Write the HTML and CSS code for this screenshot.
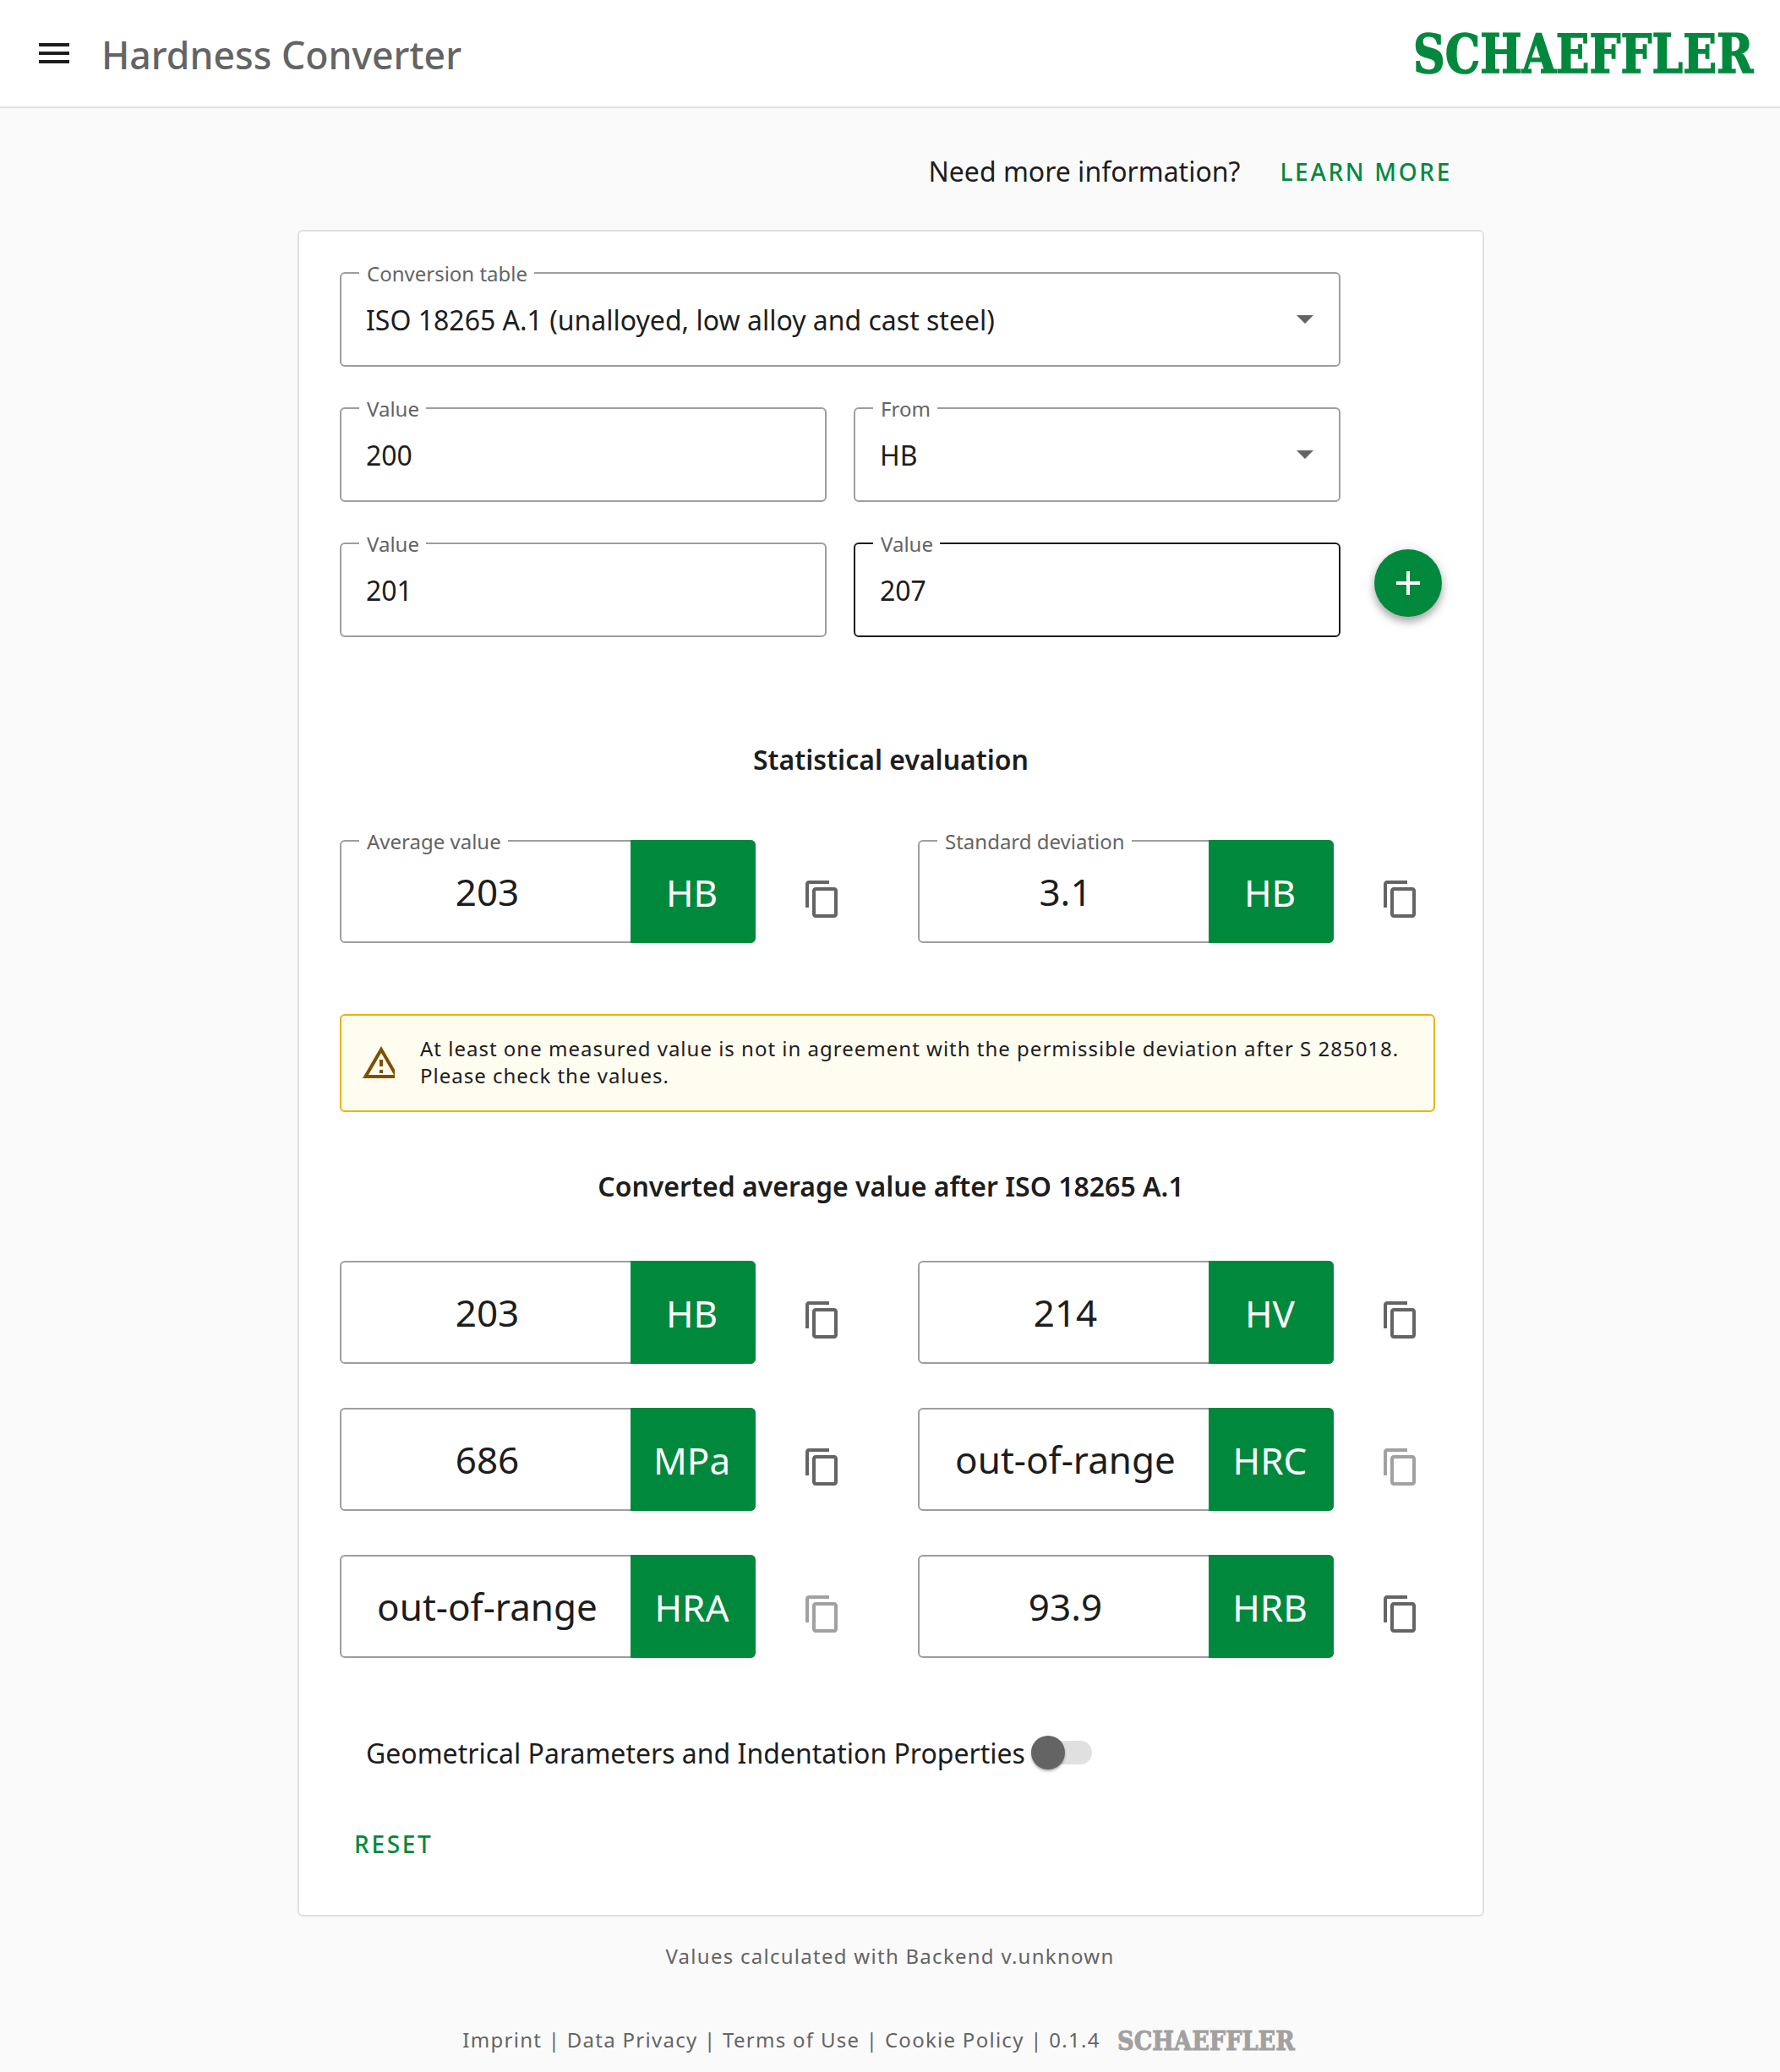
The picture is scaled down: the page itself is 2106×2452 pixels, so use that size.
FILE: index.html
```html
<!DOCTYPE html>
<html lang="en">
<head>
    <meta charset="UTF-8">
    <meta name="viewport" content="width=device-width, initial-scale=1.0">
    <title>Hardness Converter</title>
    <link rel="stylesheet" href="styles.css">
</head>
<body>
    <header class="topbar">
        <svg class="menu-icon" viewBox="0 0 36 24"><path d="M0 0h36v4H0zM0 10h36v4H0zM0 20h36v4H0z"/></svg>
        <h1 class="app-title">Hardness Converter</h1>
        <span class="logo">SCHAEFFLER</span>
    </header>

    <div class="info-row">
        <span>Need more information?</span>
        <a class="link-btn" href="#">LEARN MORE</a>
    </div>

    <main class="card">
        <div class="field wide select">
            <label>Conversion table</label>
            <span>ISO 18265 A.1 (unalloyed, low alloy and cast steel)</span>
        </div>

        <div class="form-row">
            <div class="field">
                <label>Value</label>
                <span>200</span>
            </div>
            <div class="field select">
                <label>From</label>
                <span>HB</span>
            </div>
        </div>

        <div class="form-row">
            <div class="field">
                <label>Value</label>
                <span>201</span>
            </div>
            <div class="field focused">
                <label>Value</label>
                <span>207</span>
            </div>
            <button class="fab" type="button">
                <svg viewBox="0 0 28 28"><path d="M12 0h4v12h12v4H16v12h-4V16H0v-4h12z"/></svg>
            </button>
        </div>

        <h2 class="section-title first">Statistical evaluation</h2>

        <div class="results stats">
            <div class="result">
                <div class="result-box">
                    <label>Average value</label>
                    <span class="result-value">203</span>
                    <span class="result-unit">HB</span>
                </div>
                <svg class="copy" viewBox="0 0 24 24"><path d="M16 1H4c-1.1 0-2 .9-2 2v14h2V3h12V1zm3 4H8c-1.1 0-2 .9-2 2v14c0 1.1.9 2 2 2h11c1.1 0 2-.9 2-2V7c0-1.1-.9-2-2-2zm0 16H8V7h11v14z"/></svg>
            </div>
            <div class="result">
                <div class="result-box">
                    <label>Standard deviation</label>
                    <span class="result-value">3.1</span>
                    <span class="result-unit">HB</span>
                </div>
                <svg class="copy" viewBox="0 0 24 24"><path d="M16 1H4c-1.1 0-2 .9-2 2v14h2V3h12V1zm3 4H8c-1.1 0-2 .9-2 2v14c0 1.1.9 2 2 2h11c1.1 0 2-.9 2-2V7c0-1.1-.9-2-2-2zm0 16H8V7h11v14z"/></svg>
            </div>
        </div>

        <div class="banner">
            <div class="banner-icon">
                <svg viewBox="0 0 24 24"><path d="M12 5.99L19.53 19H4.47L12 5.99M12 2L1 21h22L12 2zm1 14h-2v2h2v-2zm0-6h-2v4h2v-4z"/></svg>
            </div>
            <p>At least one measured value is not in agreement with the permissible deviation after S 285018.<br>Please check the values.</p>
        </div>

        <h2 class="section-title">Converted average value after ISO 18265 A.1</h2>

        <div class="results converted">
            <div class="result">
                <div class="result-box">
                    <span class="result-value">203</span>
                    <span class="result-unit">HB</span>
                </div>
                <svg class="copy" viewBox="0 0 24 24"><path d="M16 1H4c-1.1 0-2 .9-2 2v14h2V3h12V1zm3 4H8c-1.1 0-2 .9-2 2v14c0 1.1.9 2 2 2h11c1.1 0 2-.9 2-2V7c0-1.1-.9-2-2-2zm0 16H8V7h11v14z"/></svg>
            </div>
            <div class="result">
                <div class="result-box">
                    <span class="result-value">214</span>
                    <span class="result-unit">HV</span>
                </div>
                <svg class="copy" viewBox="0 0 24 24"><path d="M16 1H4c-1.1 0-2 .9-2 2v14h2V3h12V1zm3 4H8c-1.1 0-2 .9-2 2v14c0 1.1.9 2 2 2h11c1.1 0 2-.9 2-2V7c0-1.1-.9-2-2-2zm0 16H8V7h11v14z"/></svg>
            </div>
            <div class="result">
                <div class="result-box">
                    <span class="result-value">686</span>
                    <span class="result-unit">MPa</span>
                </div>
                <svg class="copy" viewBox="0 0 24 24"><path d="M16 1H4c-1.1 0-2 .9-2 2v14h2V3h12V1zm3 4H8c-1.1 0-2 .9-2 2v14c0 1.1.9 2 2 2h11c1.1 0 2-.9 2-2V7c0-1.1-.9-2-2-2zm0 16H8V7h11v14z"/></svg>
            </div>
            <div class="result">
                <div class="result-box">
                    <span class="result-value">out-of-range</span>
                    <span class="result-unit">HRC</span>
                </div>
                <svg class="copy disabled" viewBox="0 0 24 24"><path d="M16 1H4c-1.1 0-2 .9-2 2v14h2V3h12V1zm3 4H8c-1.1 0-2 .9-2 2v14c0 1.1.9 2 2 2h11c1.1 0 2-.9 2-2V7c0-1.1-.9-2-2-2zm0 16H8V7h11v14z"/></svg>
            </div>
            <div class="result">
                <div class="result-box">
                    <span class="result-value">out-of-range</span>
                    <span class="result-unit">HRA</span>
                </div>
                <svg class="copy disabled" viewBox="0 0 24 24"><path d="M16 1H4c-1.1 0-2 .9-2 2v14h2V3h12V1zm3 4H8c-1.1 0-2 .9-2 2v14c0 1.1.9 2 2 2h11c1.1 0 2-.9 2-2V7c0-1.1-.9-2-2-2zm0 16H8V7h11v14z"/></svg>
            </div>
            <div class="result">
                <div class="result-box">
                    <span class="result-value">93.9</span>
                    <span class="result-unit">HRB</span>
                </div>
                <svg class="copy" viewBox="0 0 24 24"><path d="M16 1H4c-1.1 0-2 .9-2 2v14h2V3h12V1zm3 4H8c-1.1 0-2 .9-2 2v14c0 1.1.9 2 2 2h11c1.1 0 2-.9 2-2V7c0-1.1-.9-2-2-2zm0 16H8V7h11v14z"/></svg>
            </div>
        </div>

        <div class="toggle-row">
            <span>Geometrical Parameters and Indentation Properties</span>
            <span class="toggle"><span class="toggle-thumb"></span></span>
        </div>

        <a class="link-btn reset" href="#">RESET</a>
    </main>

    <p class="backend">Values calculated with Backend v.unknown</p>

    <footer class="legal">
        <span>Imprint | Data Privacy | Terms of Use | Cookie Policy | 0.1.4</span>
        <span class="logo small">SCHAEFFLER</span>
    </footer>
</body>
</html>
```

FILE: styles.css
```css
* {
    box-sizing: border-box;
}
body {
    margin: 0;
    background-color: #fafafa;
    color: #1d1d1d;
    font-family: "Noto Sans", sans-serif;
    font-size: 32px;
}
.topbar {
    display: flex;
    align-items: center;
    height: 128px;
    padding: 0 32px 0 46px;
    background-color: white;
    border-bottom: 2px solid #e0e0e0;
}
.menu-icon {
    width: 36px;
    height: 24px;
    margin-top: -1px;
    fill: #1d1d1d;
}
.app-title {
    margin: 3px 0 0 38px;
    font-size: 44.6px;
    font-weight: 500;
    color: #646464;
}
.logo {
    flex: none;
    margin: 2px 0 0 auto;
    color: #00893d;
    font-family: "DejaVu Serif", serif;
    font-size: 63px;
    font-weight: bold;
    letter-spacing: 0;
    line-height: 72px;
    -webkit-text-stroke: 1.6px #00893d;
    transform: scaleX(.827);
    transform-origin: right center;
}
.info-row {
    display: flex;
    align-items: center;
    justify-content: flex-end;
    column-gap: 15px;
    height: 144px;
    width: 1404px;
    margin: 0 0 0 352px;
    padding: 5px 6px 0 0;
}
.link-btn {
    display: inline-block;
    padding: 0 32px;
    color: #00893d;
    font-size: 28px;
    font-weight: 500;
    letter-spacing: 2.7px;
    line-height: 72px;
    text-decoration: none;
}
.card {
    width: 1404px;
    margin: 0 0 0 352px;
    padding: 48px 48px 48px;
    background-color: white;
    border: 2px solid #e0e0e0;
    border-radius: 6px;
}
.field {
    position: relative;
    display: flex;
    align-items: center;
    height: 112px;
    padding: 0 29px;
    border: 2px solid #9e9e9e;
    border-radius: 6px;
    background-color: white;
}
.field.wide {
    width: 1184px;
}
.field.focused {
    border-color: #1d1d1d;
}
.field.select::after {
    content: "";
    position: absolute;
    right: 30px;
    top: 50%;
    margin-top: -5px;
    border-left: 10px solid transparent;
    border-right: 10px solid transparent;
    border-top: 10px solid #646464;
}
.field label,
.result-box label {
    position: absolute;
    left: 21px;
    top: -13px;
    padding: 0 8px 0 9px;
    background-color: white;
    color: #646464;
    font-size: 24px;
    line-height: 26px;
}
.form-row {
    display: grid;
    grid-template-columns: 576px 576px auto;
    column-gap: 32px;
    margin-top: 48px;
}
.fab {
    width: 80px;
    height: 80px;
    margin: 8px 0 0 8px;
    padding: 0;
    display: flex;
    align-items: center;
    justify-content: center;
    border: none;
    border-radius: 50%;
    background-color: #00893d;
    box-shadow: 0 6px 10px rgba(0, 0, 0, .28), 0 2px 16px rgba(0, 0, 0, .12);
}
.fab svg {
    width: 28px;
    height: 28px;
    fill: white;
}
.section-title {
    margin: 64px 0 0;
    font-size: 32px;
    font-weight: 600;
    line-height: 48px;
    text-align: center;
}
.section-title.first {
    margin-top: 121px;
}
.results {
    display: grid;
    grid-template-columns: 684px 684px;
    row-gap: 52px;
    margin-top: 64px;
}
.results.stats {
    margin-top: 71px;
}
.result {
    display: flex;
    align-items: flex-start;
}
.result-box {
    position: relative;
    display: flex;
    width: 492px;
    height: 122px;
    border: 2px solid #9e9e9e;
    border-radius: 6px;
}
.result-value {
    flex: 1;
    align-self: center;
    padding-left: 3px;
    text-align: center;
    font-size: 44px;
}
.result-unit {
    width: 148px;
    margin: -2px -2px -2px 0;
    padding: 2px 3px 0 0;
    display: flex;
    align-items: center;
    justify-content: center;
    background-color: #00893d;
    border-radius: 0 6px 6px 0;
    color: white;
    font-size: 44px;
}
.copy {
    flex: none;
    width: 48px;
    height: 48px;
    margin: 46px 0 0 55px;
    fill: #646464;
}
.copy.disabled {
    fill: #a1a1a1;
}
.banner {
    display: flex;
    align-items: center;
    height: 116px;
    margin-top: 84px;
    width: 1296px;
    padding-left: 23px;
    background-color: #fffcf0;
    border: 2px solid #ebb400;
    border-radius: 6px;
}
.banner-icon {
    width: 40px;
    height: 48px;
    overflow: hidden;
    flex: none;
}
.banner-icon svg {
    display: block;
    width: 48px;
    height: 48px;
    fill: #7f4f00;
}
.banner p {
    margin: -3px 0 0 30px;
    font-size: 24px;
    line-height: 32px;
    letter-spacing: 1px;
}
.toggle-row {
    display: flex;
    align-items: center;
    height: 48px;
    margin-top: 88px;
    padding-left: 31px;
}
.toggle {
    position: relative;
    width: 72px;
    height: 28px;
    margin-left: 7px;
    background-color: #e0e0e0;
    border-radius: 14px;
}
.toggle-thumb {
    position: absolute;
    left: 0;
    top: -6px;
    width: 40px;
    height: 40px;
    border-radius: 50%;
    background-color: #646464;
    box-shadow: 0 2px 3px rgba(0, 0, 0, .3);
}
.reset {
    display: block;
    width: max-content;
    margin-top: 48px;
    padding: 0 17px;
}
.backend {
    margin: 31px 0 0;
    color: #646464;
    font-size: 24px;
    line-height: 32px;
    letter-spacing: 1.27px;
    text-align: center;
}
.legal {
    display: flex;
    align-items: center;
    justify-content: center;
    height: 48px;
    margin-top: 58px;
    padding-right: 27px;
    color: #646464;
    font-size: 24px;
    letter-spacing: 1.28px;
}
.logo.small {
    margin: 4px 0 0 -17px;
    color: #a1a1a1;
    font-size: 32px;
    line-height: 36px;
    -webkit-text-stroke: 1px #a1a1a1;
    transform: scaleX(.85);
}
```
